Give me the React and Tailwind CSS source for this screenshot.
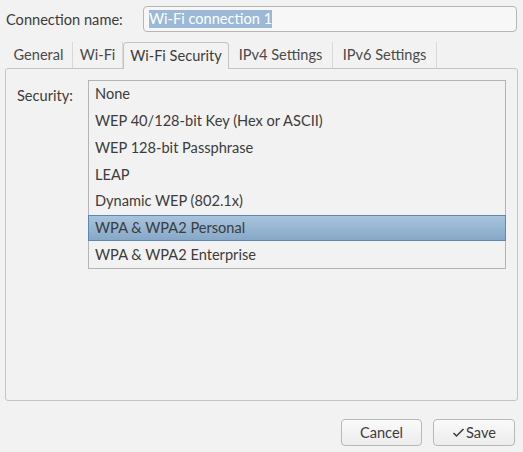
import React from "react";

const options = [
    "None",
    "WEP 40/128-bit Key (Hex or ASCII)",
    "WEP 128-bit Passphrase",
    "LEAP",
    "Dynamic WEP (802.1x)",
    "WPA & WPA2 Personal",
    "WPA & WPA2 Enterprise",
];

const tabs = [
    { label: "General", w: "w-[68px]" },
    { label: "Wi-Fi", w: "w-[50px]" },
    { label: "Wi-Fi Security", w: "w-[106px]", active: true },
    { label: "IPv4 Settings", w: "w-[104px]" },
    { label: "IPv6 Settings", w: "w-[104px]" },
];

export default function App() {
    const selected = 5;
    return (
        <div className="w-[523px] h-[452px] bg-[#f2f2f2] text-[#3c3c3c] text-[14.6px] font-['Lato','Noto_Sans',sans-serif] flex flex-col overflow-hidden">
            <div className="flex items-center h-[26px] mt-[6px] pl-[6px] pr-[6px]">
                <span className="w-[137px] pt-[1px]">Connection name:</span>
                <div className="flex-1 h-full flex items-center rounded-[4px] border border-[#b6b6b6] bg-[#f7f7f7] px-[5px]">
                    <span className="bg-[#9bb9d6] text-white leading-[18px]">Wi-Fi connection 1</span>
                </div>
            </div>

            <div className="flex items-end h-[27px] mt-[9px] pl-[5px] z-10">
                {tabs.map((t) =>
                    t.active ? (
                        <div
                            key={t.label}
                            className={`${t.w} h-[27px] flex items-center justify-center border border-b-0 border-[#c4c4c4] rounded-t-[4px] bg-[#f2f2f2] -mb-px pb-px`}
                        >
                            {t.label}
                        </div>
                    ) : (
                        <div
                            key={t.label}
                            className={`${t.w} h-[26px] flex items-center justify-center border-r border-[#d8d8d8] text-[#4a4a4a]`}
                        >
                            {t.label}
                        </div>
                    )
                )}
            </div>

            <div className="ml-[5px] w-[513px] h-[333px] border border-[#c4c4c4] rounded-[3px] flex pt-[11px]">
                <div className="w-[82px] pl-[11px] pt-[5px]">Security:</div>
                <div className="w-[418px] h-[189px] border border-[#b4b4b4] bg-[#f2f2f2] flex flex-col">
                    {options.map((o, i) => (
                        <div
                            key={o}
                            className={
                                i === selected
                                    ? "h-[26.8px] flex items-center pl-[6px] border border-[#5e88b0] bg-gradient-to-b from-[#a8c4dc] to-[#86a8c8] -mx-px"
                                    : "h-[26.8px] flex items-center pl-[6px]"
                            }
                        >
                            {o}
                        </div>
                    ))}
                </div>
            </div>

            <div className="flex justify-end gap-[11px] mt-[18px] pr-[8px]">
                <button className="w-[81px] h-[27px] rounded-[4px] border border-[#b8b8b8] bg-gradient-to-b from-[#fafafa] to-[#ececec] text-[#3c3c3c]">
                    Cancel
                </button>
                <button className="w-[82px] h-[27px] rounded-[4px] border border-[#b8b8b8] bg-gradient-to-b from-[#fafafa] to-[#ececec] text-[#3c3c3c] flex items-center justify-center gap-[1px]">
                    <svg width="13" height="11" viewBox="0 0 13 11">
                        <path d="M1.5 6 L4.5 9 L11.5 2" fill="none" stroke="#3c3c3c" strokeWidth="1.5" />
                    </svg>
                    Save
                </button>
            </div>
        </div>
    );
}
